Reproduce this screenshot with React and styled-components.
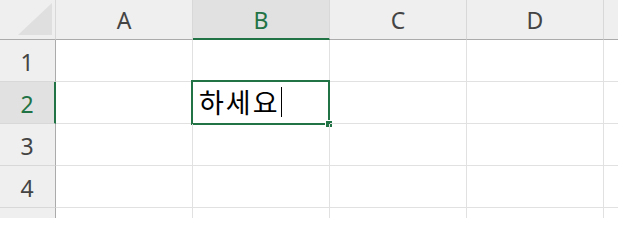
import React from 'react';
import styled, { createGlobalStyle } from 'styled-components';

const GlobalStyle = createGlobalStyle`
	html, body {
		margin: 0;
		padding: 0;
		background: #ffffff;
		overflow: hidden;
	}
`;

const GREEN = '#217346';

const Sheet = styled.div`
	display: grid;
	grid-template-columns: 56px repeat(5, 137px);
	grid-template-rows: 40px repeat(5, 42px);
	width: 618px;
	height: 218px;
	overflow: hidden;
	font-family: 'Noto Sans', 'Open Sans', sans-serif;
`;

const Corner = styled.div`
	position: relative;
	box-sizing: border-box;
	background: #efefef;
	border-right: 1px solid #d8d8d8;
	border-bottom: 1px solid #ababab;

	svg {
		display: block;
	}
`;

const ColHeader = styled.div`
	box-sizing: border-box;
	display: flex;
	align-items: center;
	justify-content: center;
	background: ${(p) => (p.$active ? '#e1e1e1' : '#efefef')};
	color: ${(p) => (p.$active ? GREEN : '#444444')};
	border-right: 1px solid #d8d8d8;
	border-bottom: ${(p) => (p.$active ? `2px solid ${GREEN}` : '1px solid #ababab')};
	font-size: 23px;
	padding-top: ${(p) => (p.$active ? '1px' : '0')};
`;

const RowHeader = styled.div`
	box-sizing: border-box;
	display: flex;
	align-items: center;
	justify-content: center;
	background: ${(p) => (p.$active ? '#e1e1e1' : '#efefef')};
	color: ${(p) => (p.$active ? GREEN : '#444444')};
	border-right: ${(p) => (p.$active ? `2px solid ${GREEN}` : '1px solid #ababab')};
	border-bottom: 1px solid #d8d8d8;
	font-size: 23px;
	padding: 2px ${(p) => (p.$active ? '0' : '1px')} 0 0;
`;

const Cell = styled.div`
	position: relative;
	box-sizing: border-box;
	border-right: 1px solid #e1e1e1;
	border-bottom: 1px solid #e1e1e1;
	display: flex;
	align-items: flex-end;
`;

const Selection = styled.div`
	position: absolute;
	top: -2px;
	left: -2px;
	right: -1px;
	bottom: -2px;
	border: 2px solid ${GREEN};
	pointer-events: none;
`;

const FillHandle = styled.div`
	position: absolute;
	right: -5px;
	bottom: -5px;
	width: 6px;
	height: 6px;
	background: ${GREEN};
	border: 1px solid #ffffff;
`;

const Entry = styled.div`
	display: flex;
	align-items: center;
	padding: 0 0 6px 6px;
	font-family: 'Malgun Gothic', 'Noto Sans CJK KR', sans-serif;
	font-size: 27px;
	letter-spacing: 2px;
	line-height: 30px;
	color: #000000;
`;

const Caret = styled.span`
	display: inline-block;
	width: 1px;
	height: 30px;
	margin-left: 1px;
	background: #000000;
`;

const columns = ['A', 'B', 'C', 'D', 'E'];
const rows = [1, 2, 3, 4, 5];

const App = () => {
	return (
		<>
			<GlobalStyle />
			<Sheet>
				<Corner>
					<svg width="55" height="39" viewBox="0 0 55 39">
						<polygon points="18,35 52,3 52,35" fill="#dfdfdf" />
					</svg>
				</Corner>
				{columns.map((c) => (
					<ColHeader key={c} $active={c === 'B'}>
						{c === 'E' ? '' : c}
					</ColHeader>
				))}
				{rows.map((r) => (
					<React.Fragment key={r}>
						<RowHeader $active={r === 2}>{r === 5 ? '' : r}</RowHeader>
						{columns.map((c) =>
							r === 2 && c === 'B' ? (
								<Cell key={c}>
									<Entry>
										하세요
										<Caret />
									</Entry>
									<Selection>
										<FillHandle />
									</Selection>
								</Cell>
							) : (
								<Cell key={c} />
							)
						)}
					</React.Fragment>
				))}
			</Sheet>
		</>
	);
};

export default App;
